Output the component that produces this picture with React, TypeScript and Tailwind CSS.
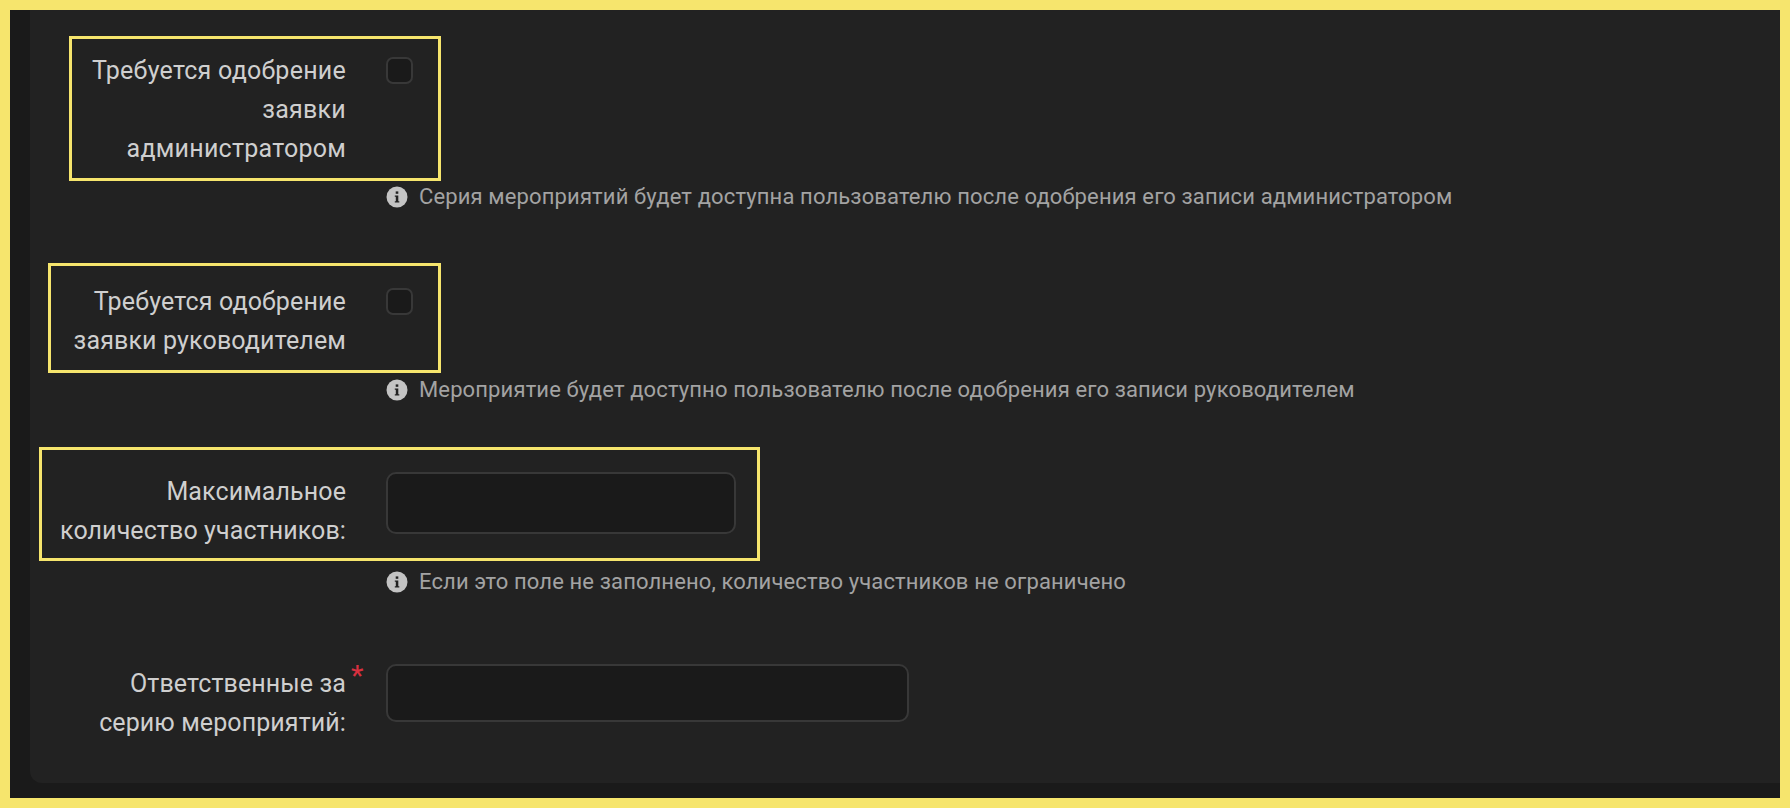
import React from 'react';

function InfoIcon() {
  return (
    <svg viewBox="0 0 22 22" className="w-[22px] h-[22px] shrink-0">
      <circle cx="11" cy="11" r="10.5" fill="#c4c4c4" />
      <rect x="9.7" y="5.4" width="2.6" height="2.4" fill="#222222" />
      <path d="M8.8 9.4h3.5v5.8h1v1.4H8.8v-1.4h1v-4.4h-1z" fill="#222222" />
    </svg>
  );
}

function Hint({ text, className }: { text: string; className: string }) {
  return (
    <div className={`flex items-center gap-[11px] ml-[356px] text-[22px] leading-[22px] tracking-[0.13px] text-[#a3a3a3] ${className}`}>
      <InfoIcon />
      <span>{text}</span>
    </div>
  );
}

function Checkbox() {
  return <div className="w-[27px] h-[27px] shrink-0 rounded-[7px] border-2 border-[#383838] bg-[#1a1a1a]" />;
}

export default function App() {
  return (
    <div className="w-[1790px] h-[808px] bg-[#f6e56d] p-[10px] overflow-hidden" style={{ fontFamily: 'Roboto, "Noto Sans", sans-serif' }}>
      <div className="h-full bg-[#1a1a1a] pl-[20px] pb-[15px]">
        <div className="h-full bg-[#222222] rounded-bl-[12px] pt-[26px] text-[25px] leading-[39px] text-[#cfcfcf]">
          {/* administrator approval */}
          <div className="ml-[39px] w-[372px] h-[145px] border-[3px] border-[#f6e56d] flex pt-[12px]">
            <div className="w-[274px] text-right tracking-[0.25px]">
              Требуется одобрение<br />заявки<br />администратором
            </div>
            <div className="ml-[40px] pt-[6px]"><Checkbox /></div>
          </div>
          <Hint text="Серия мероприятий будет доступна пользователю после одобрения его записи администратором" className="mt-[5px]" />

          {/* manager approval */}
          <div className="mt-[55px] ml-[18px] w-[393px] h-[110px] border-[3px] border-[#f6e56d] flex pt-[16px]">
            <div className="w-[295px] text-right tracking-[0.15px]">
              Требуется одобрение<br />заявки руководителем
            </div>
            <div className="ml-[40px] pt-[6px]"><Checkbox /></div>
          </div>
          <Hint text="Мероприятие будет доступно пользователю после одобрения его записи руководителем" className="mt-[6px]" />

          {/* max participants */}
          <div className="mt-[46px] ml-[9px] w-[721px] h-[114px] border-[3px] border-[#f6e56d] flex pt-[22px]">
            <div className="w-[304px] text-right tracking-[0.1px]">
              Максимальное<br />количество участников:
            </div>
            <input className="ml-[40px] self-start w-[350px] h-[62px] rounded-[10px] border-2 border-[#383838] bg-[#1a1a1a]" />
          </div>
          <Hint text="Если это поле не заполнено, количество участников не ограничено" className="mt-[10px]" />

          {/* responsible */}
          <div className="mt-[71px] flex">
            <div className="w-[316px] text-right tracking-[0.1px]">
              Ответственные за<br />серию мероприятий:
            </div>
            <div className="w-[40px] relative">
              <span className="absolute left-[5px] top-[-2px] font-medium text-[#d8303f] text-[28px] leading-[28px]">*</span>
            </div>
            <input className="w-[523px] h-[58px] rounded-[10px] border-2 border-[#383838] bg-[#1a1a1a]" />
          </div>
        </div>
      </div>
    </div>
  );
}
